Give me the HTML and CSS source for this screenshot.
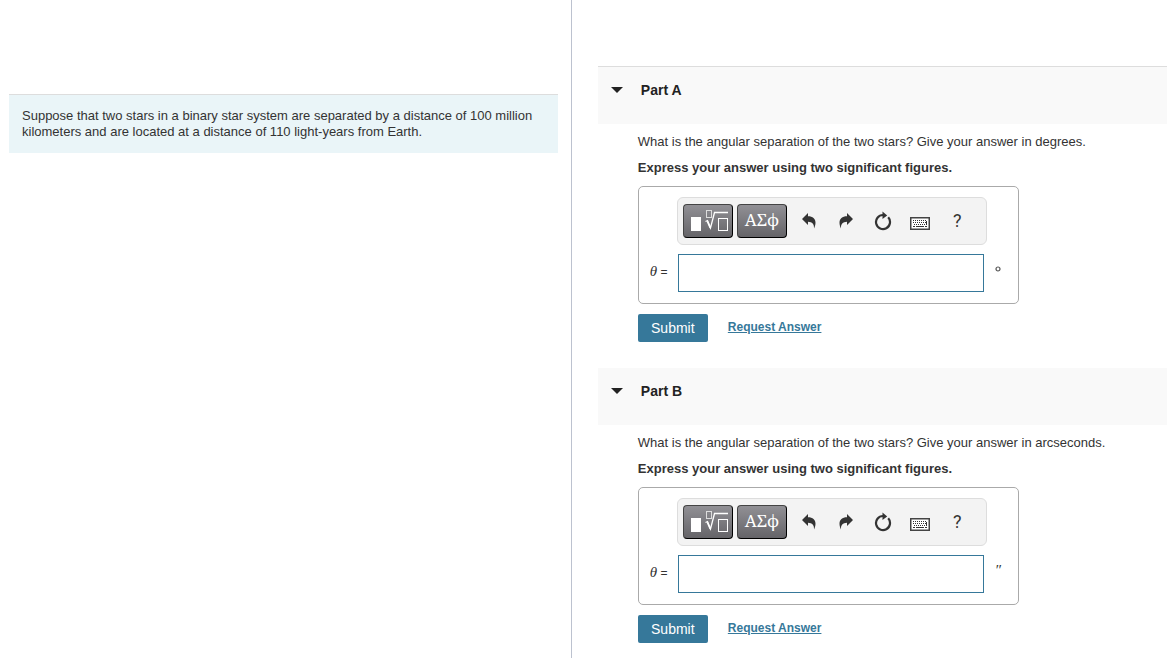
FILE: index.html
```html
<!DOCTYPE html>
<html lang="en">
<head>
<meta charset="utf-8">
<meta name="viewport" content="width=device-width, initial-scale=1">
<title>Binary Star Separation</title>
<link rel="stylesheet" href="styles.css">
</head>
<body>
<svg class="sprite" aria-hidden="true">
  <symbol id="i-template" viewBox="0 0 38 22">
    <rect x="0" y="7" width="10" height="14" fill="#fff"/>
    <g fill="none" stroke="#fff">
      <rect x="15.500" y="0.500" width="5" height="7" stroke="#ddd"/>
      <path d="M14.500 11.500l2-.8 3 7.300L23.500 2.500H37" stroke-width="1.300"/>
      <path d="M16.500 11.500l2.800 6.500" stroke-width="1.700"/>
      <rect x="27.500" y="8.500" width="9" height="12"/>
    </g>
  </symbol>
  <symbol id="i-undo" viewBox="0 0 14 16">
    <path d="M0 6L6 0v3.300c4.800 0 7.500 2.500 7.500 6.500 0 2.300-.7 4-1.500 5.700.3-4.300-1.700-6.600-6-6.700V12z" fill="#333"/>
  </symbol>
  <symbol id="i-redo" viewBox="0 0 14 16">
    <path d="M14 6L8 0v3.300C3.200 3.300.5 5.800.5 9.800c0 2.300.7 4 1.500 5.700C1.700 11.200 3.700 8.900 8 8.800V12z" fill="#333"/>
  </symbol>
  <symbol id="i-reset" viewBox="0 0 18 20">
    <path d="M14.200 6.300A7 7 0 1 1 9 4" fill="none" stroke="#333" stroke-width="2.200"/>
    <path d="M8.500 0.500l4.700 4-4.700 3.500z" fill="#333"/>
  </symbol>
  <symbol id="i-keyboard" viewBox="0 0 20 13">
    <rect x="0.750" y="0.750" width="18.500" height="11.500" fill="#fff" stroke="#444" stroke-width="1.500"/>
    <path d="M3 3.500h14M3 5.500h14M4 7.500h12" stroke="#333" stroke-dasharray="1 1"/>
    <path d="M16.500 4v4M3 9.500h2M6 9.500h8M15 9.500h2" stroke="#333"/>
  </symbol>
  <symbol id="i-degree" viewBox="0 0 6 6"><circle cx="3" cy="3" r="2" fill="none" stroke="#555" stroke-width="1.200"/></symbol>
</svg>

<div class="layout">
  <aside class="intro-pane">
    <p class="intro">Suppose that two stars in a binary star system are separated by a distance of 100 million kilometers and are located at a distance of 110 light-years from Earth.</p>
  </aside>

  <main class="parts">
    <section class="part">
      <h2 class="part-header"><span class="caret"></span>Part A</h2>
      <form class="part-body">
        <p class="question">What is the angular separation of the two stars? Give your answer in degrees.</p>
        <p class="instruction">Express your answer using two significant figures.</p>
        <div class="answer-box">
          <div class="toolbar">
            <button type="button" class="palette templates" aria-label="Templates"><svg class="template"><use href="#i-template"/></svg></button>
            <button type="button" class="palette greek" aria-label="Symbols">ΑΣϕ</button>
            <div class="tools">
              <button type="button" class="tool" aria-label="Undo"><svg class="arrow"><use href="#i-undo"/></svg></button>
              <button type="button" class="tool" aria-label="Redo"><svg class="arrow"><use href="#i-redo"/></svg></button>
              <button type="button" class="tool" aria-label="Reset"><svg class="reset"><use href="#i-reset"/></svg></button>
              <button type="button" class="tool" aria-label="Keyboard shortcuts"><svg class="keyboard"><use href="#i-keyboard"/></svg></button>
              <button type="button" class="tool help" aria-label="Help">?</button>
            </div>
          </div>
          <label class="variable" for="answer-a"><i>θ</i> =</label>
          <input class="answer" id="answer-a" type="text">
          <span class="unit"><svg class="degree" role="img" aria-label="degrees"><use href="#i-degree"/></svg></span>
        </div>
        <div class="actions">
          <button type="button" class="submit">Submit</button>
          <a class="request" href="#">Request Answer</a>
        </div>
      </form>
    </section>

    <section class="part">
      <h2 class="part-header"><span class="caret"></span>Part B</h2>
      <form class="part-body">
        <p class="question">What is the angular separation of the two stars? Give your answer in arcseconds.</p>
        <p class="instruction">Express your answer using two significant figures.</p>
        <div class="answer-box">
          <div class="toolbar">
            <button type="button" class="palette templates" aria-label="Templates"><svg class="template"><use href="#i-template"/></svg></button>
            <button type="button" class="palette greek" aria-label="Symbols">ΑΣϕ</button>
            <div class="tools">
              <button type="button" class="tool" aria-label="Undo"><svg class="arrow"><use href="#i-undo"/></svg></button>
              <button type="button" class="tool" aria-label="Redo"><svg class="arrow"><use href="#i-redo"/></svg></button>
              <button type="button" class="tool" aria-label="Reset"><svg class="reset"><use href="#i-reset"/></svg></button>
              <button type="button" class="tool" aria-label="Keyboard shortcuts"><svg class="keyboard"><use href="#i-keyboard"/></svg></button>
              <button type="button" class="tool help" aria-label="Help">?</button>
            </div>
          </div>
          <label class="variable" for="answer-b"><i>θ</i> =</label>
          <input class="answer" id="answer-b" type="text">
          <span class="unit"><i>″</i></span>
        </div>
        <div class="actions">
          <button type="button" class="submit">Submit</button>
          <a class="request" href="#">Request Answer</a>
        </div>
      </form>
    </section>
  </main>
</div>
</body>
</html>
```
FILE: styles.css
```css
* { box-sizing: border-box; }

body {
  margin: 0;
  background: #fff;
  color: #333;
  font: 13px/16px "Liberation Sans", Arial, sans-serif;
}

.sprite { display: none; }

.layout {
  display: flex;
  min-height: 100vh;
}

.intro-pane {
  flex: 0 0 49%;
  padding: 94px 13px 0 9px;
  border-right: 1px solid #bcc2cf;
}

.intro {
  margin: 0;
  padding: 13px;
  border-top: 1px solid #ddd;
  background: #eaf5f8;
}

.parts {
  flex: 1;
  min-width: 0;
  padding: 66px 0 0 26px;
}

.part-header {
  display: flex;
  align-items: center;
  gap: 18px;
  margin: 0;
  padding: 15px 13px 26px;
  background: #f9f9f9;
  color: #222;
  font-size: 14px;
  line-height: 16px;
}

.part:first-child .part-header { border-top: 1px solid #ddd; }

.caret {
  width: 12px;
  border: 6px solid transparent;
  border-top-color: #222;
  border-bottom: 0;
}

.part-body { padding: 10px 20px 26px 40px; }

.question { margin: 0 0 10px; }

.instruction {
  margin: 0 0 10px;
  font-weight: bold;
}

.answer-box {
  display: grid;
  grid-template-columns: 27px 306px auto;
  align-items: center;
  row-gap: 9px;
  width: fit-content;
  padding: 10px 15px 11px 11px;
  border: 1px solid #aaa;
  border-radius: 5px;
}

.toolbar {
  grid-column: 2 / -1;
  display: flex;
  align-items: center;
  gap: 4px;
  width: 310px;
  height: 48px;
  padding: 0 5px;
  border: 1px solid #ddd;
  border-radius: 6px;
  background: #f3f3f3;
}

.palette {
  display: flex;
  align-items: center;
  justify-content: center;
  width: 50px;
  height: 34px;
  padding: 0;
  border: 1px solid #000;
  border-top-color: #444;
  border-left-color: #444;
  border-radius: 4px;
  background: linear-gradient(#919095, #656468);
  color: #fff;
}

.templates { padding-left: 4px; }

.greek {
  padding-bottom: 3px;
  font: 17px/20px "Noto Serif", "Liberation Serif", serif;
}

.tools {
  display: flex;
  gap: 4px;
  padding-left: 2px;
}

.tool {
  display: flex;
  align-items: center;
  justify-content: center;
  width: 33px;
  height: 34px;
  padding: 0;
  border: 0;
  background: none;
  color: #333;
}

.template { width: 38px; height: 22px; }
.arrow { width: 14px; height: 16px; }
.reset { width: 18px; height: 20px; }
.keyboard { width: 20px; height: 13px; margin-top: 4px; }
.degree { display: block; width: 6px; height: 6px; }
.help { font: 18px/20px Roboto, sans-serif; }

.variable {
  padding-bottom: 3px;
  font-size: 12px;
  white-space: nowrap;
}

.variable i {
  font-family: "Liberation Serif", serif;
  font-size: 15px;
}

.answer {
  width: 100%;
  height: 38px;
  margin-left: 1px;
  padding: 0 8px;
  border: 1px solid #36789a;
  background: #fff;
  color: inherit;
  font: inherit;
}

.unit {
  width: 20px;
  padding: 0 0 8px 12px;
  font-family: "Liberation Serif", serif;
  font-size: 15px;
}

.actions {
  display: flex;
  align-items: center;
  gap: 20px;
  margin-top: 10px;
}

.submit {
  width: 70px;
  height: 28px;
  padding: 0;
  border: 0;
  border-radius: 2px;
  background: #36789a;
  color: #fff;
  font: 14px/16px "Liberation Sans", Arial, sans-serif;
}

.request {
  padding-bottom: 2px;
  color: #36789a;
  font-size: 12px;
  font-weight: bold;
}
```
